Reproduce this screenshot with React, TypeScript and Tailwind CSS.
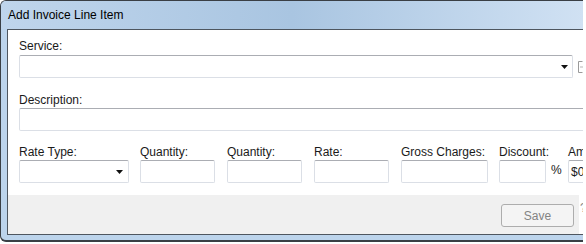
import React from "react";

function Arrow() {
  return (
    <svg width="7" height="4" viewBox="0 0 7 4" className="block">
      <path d="M0 0h7L3.5 4z" fill="#111" />
    </svg>
  );
}

function Field({ label, w, select, value }: { label: string; w: string; select?: boolean; value?: string }) {
  return (
    <div className="flex flex-col">
      <div className="h-[14px] leading-[14px] mb-[1px] whitespace-nowrap">{label}</div>
      <div
        className={`${w} h-[23px] border border-[#dbdfe6] border-t-[#abadb3] rounded-[2px] bg-white flex items-center justify-end pr-[5px]`}
      >
        {select && <Arrow />}
        {value && <span className="mr-auto pl-[2px]">{value}</span>}
      </div>
    </div>
  );
}

export default function App() {
  return (
    <div className="w-[586px] h-[244px] bg-white overflow-hidden font-['Liberation_Sans',Arial,sans-serif] text-[12px] text-[#1a1a1a]">
      <div className="w-[583px] h-[242px] bg-[#bcd4ec] border-l border-t border-b-2 border-[#3a3f45] rounded-tl-[6px] rounded-bl-[6px] overflow-hidden flex flex-col">
        {/* title bar */}
        <div className="h-[28px] shrink-0 flex items-center pl-[7px] bg-linear-to-r from-[#bfd5ec] via-[#a9c5e1] to-[#d0e1f3] text-black">
          Add Invoice Line Item
        </div>

        <div className="ml-[6px] h-[206px] border-t border-l border-b border-[#4e565f] flex flex-col">
          {/* form */}
          <div className="h-[165px] bg-white pl-[11px] pt-[9px]">
            <div className="h-[14px] leading-[14px] mb-[2px]">Service:</div>
            <div className="flex items-center">
              <div className="w-[554px] h-[23px] shrink-0 border border-[#dbdfe6] border-t-[#abadb3] rounded-[2px] flex items-center justify-end pr-[4px]">
                <Arrow />
              </div>
              <svg width="12" height="14" viewBox="0 0 12 14" className="ml-[5px] shrink-0">
                <path d="M4.5 1.5H0.5V12.5H4.5" fill="none" stroke="#9a9a9a" />
                <path d="M2 7h3" stroke="#b5b5b5" />
              </svg>
            </div>

            <div className="h-[14px] leading-[14px] mt-[15px] mb-[1px]">Description:</div>
            <div className="w-[600px] h-[23px] border border-[#dbdfe6] border-t-[#abadb3] rounded-[2px]" />

            <div className="flex mt-[14px]">
              <div className="w-[121px] shrink-0">
                <Field label="Rate Type:" w="w-[110px]" select />
              </div>
              <div className="w-[87px] shrink-0">
                <Field label="Quantity:" w="w-[75px]" />
              </div>
              <div className="w-[87px] shrink-0">
                <Field label="Quantity:" w="w-[75px]" />
              </div>
              <div className="w-[87px] shrink-0">
                <Field label="Rate:" w="w-[75px]" />
              </div>
              <div className="w-[98px] shrink-0">
                <Field label="Gross Charges:" w="w-[87px]" />
              </div>
              <div className="w-[69px] shrink-0 flex items-end">
                <Field label="Discount:" w="w-[47px]" />
                <span className="ml-[2px] mb-[4px]">%</span>
              </div>
              <div className="shrink-0">
                <Field label="Amount:" w="w-[80px]" value="$0.00" />
              </div>
            </div>
          </div>

          {/* footer */}
          <div className="flex-1 flex bg-white">
            <div className="w-[571px] shrink-0 bg-[#f0f0f0] flex justify-end items-start pt-[9px] pr-[5px]">
              <button className="w-[73px] h-[23px] border border-[#adadad] rounded-[3px] bg-[#f4f4f4] text-[#838383] leading-none">
                Save
              </button>
            </div>
            <div className="pl-[1px] pt-[7px] text-[#8a8a8a] leading-none">?</div>
          </div>
        </div>
      </div>
    </div>
  );
}
